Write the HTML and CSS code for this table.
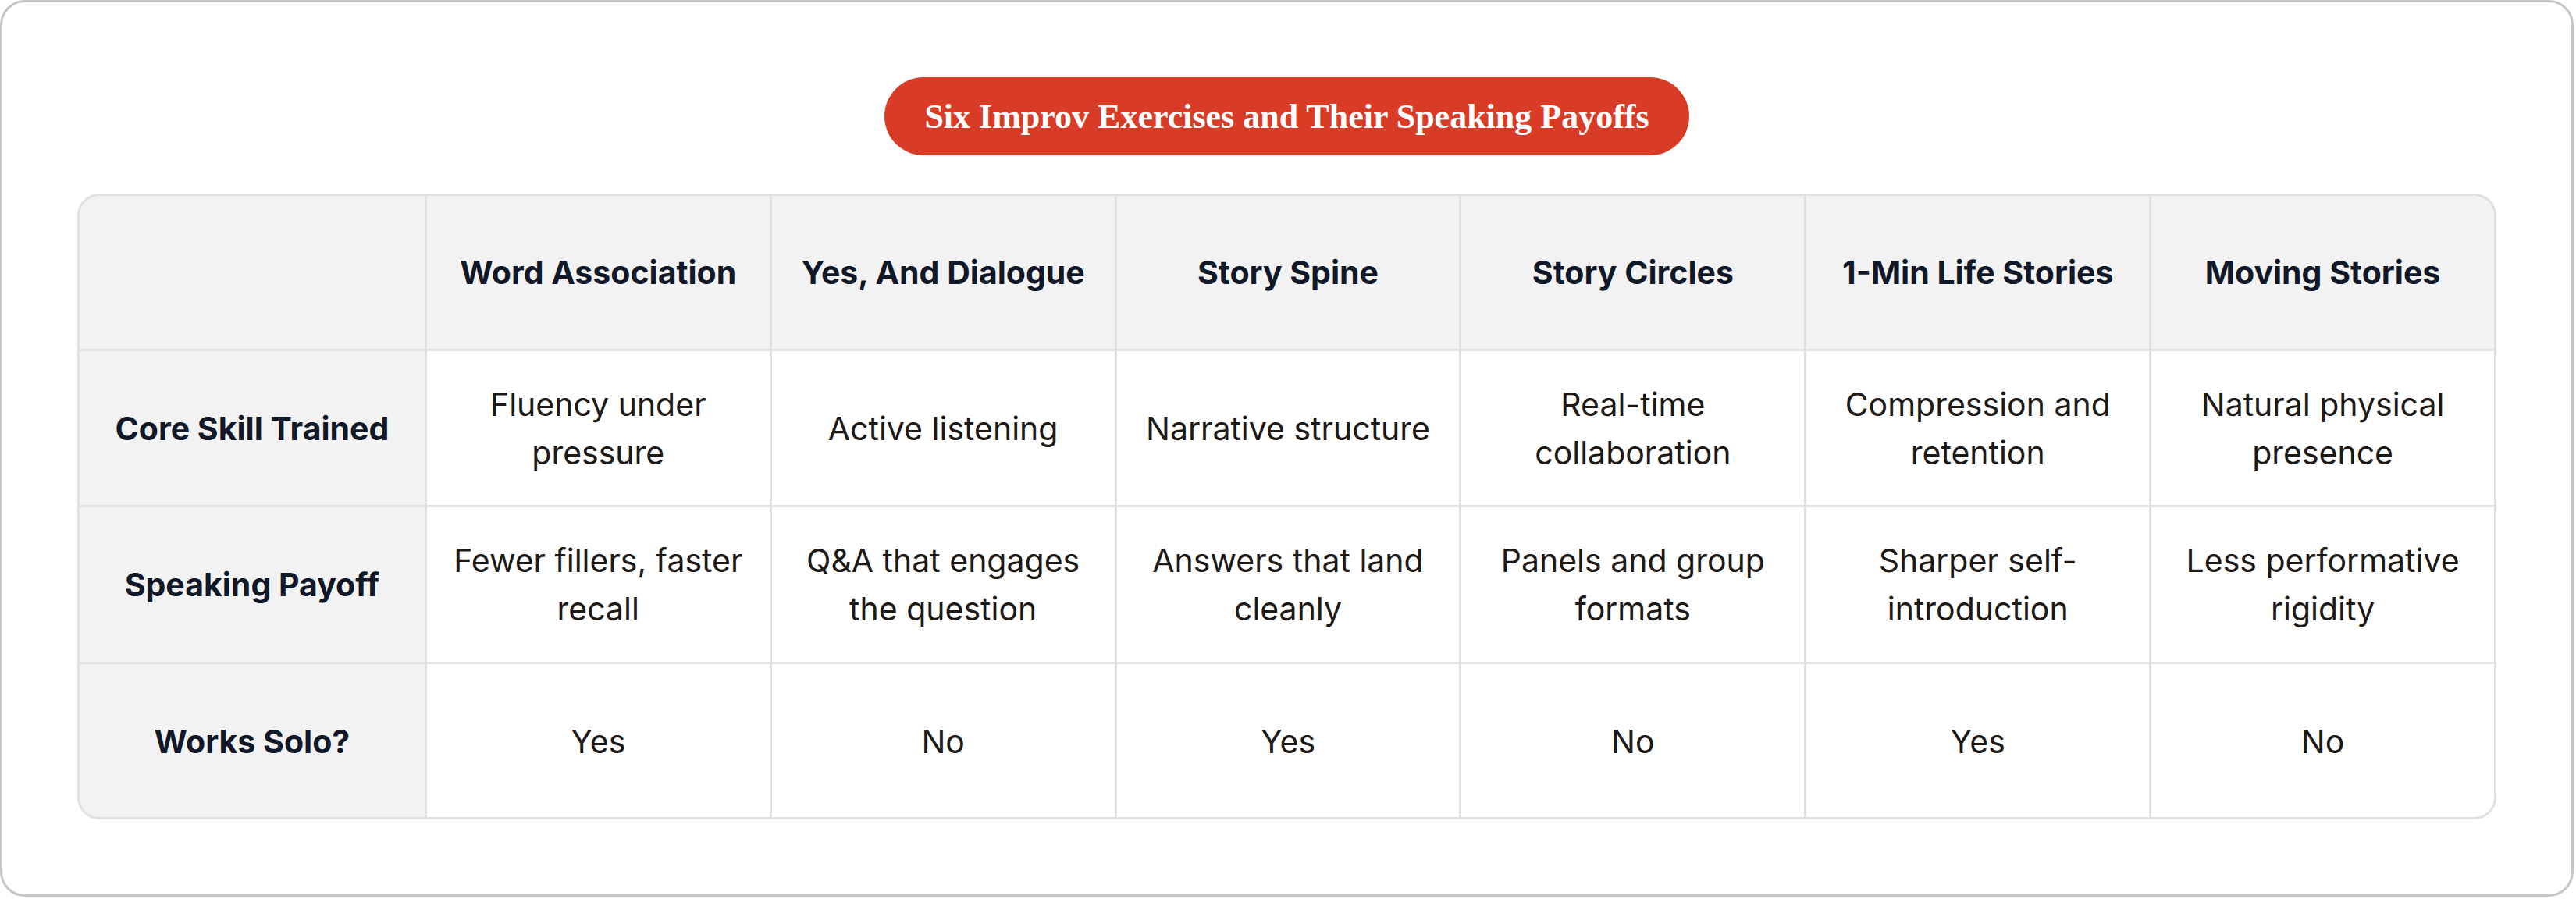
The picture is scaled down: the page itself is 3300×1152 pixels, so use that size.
FILE: index.html
```html
<!DOCTYPE html>
<html lang="en">
<head>
<meta charset="utf-8">
<title>Six Improv Exercises and Their Speaking Payoffs</title>
<link rel="stylesheet" href="styles.css">
</head>
<body>
<div class="card">
  <div class="title-row">
    <h1 class="title">Six Improv Exercises and Their Speaking Payoffs</h1>
  </div>
  <div class="table">
    <div class="cell head corner"></div>
    <div class="cell head">Word Association</div>
    <div class="cell head">Yes, And Dialogue</div>
    <div class="cell head">Story Spine</div>
    <div class="cell head">Story Circles</div>
    <div class="cell head">1-Min Life Stories</div>
    <div class="cell head">Moving Stories</div>

    <div class="cell label">Core Skill Trained</div>
    <div class="cell">Fluency under pressure</div>
    <div class="cell">Active listening</div>
    <div class="cell">Narrative structure</div>
    <div class="cell">Real-time collaboration</div>
    <div class="cell">Compression and retention</div>
    <div class="cell">Natural physical presence</div>

    <div class="cell label">Speaking Payoff</div>
    <div class="cell">Fewer fillers, faster recall</div>
    <div class="cell">Q&amp;A that engages the question</div>
    <div class="cell">Answers that land cleanly</div>
    <div class="cell">Panels and group formats</div>
    <div class="cell">Sharper self-introduction</div>
    <div class="cell">Less performative rigidity</div>

    <div class="cell label">Works Solo?</div>
    <div class="cell">Yes</div>
    <div class="cell">No</div>
    <div class="cell">Yes</div>
    <div class="cell">No</div>
    <div class="cell">Yes</div>
    <div class="cell">No</div>
  </div>
</div>
</body>
</html>
```
FILE: styles.css
```css
* { box-sizing: border-box; }

html, body {
  margin: 0;
  padding: 0;
  background: #ffffff;
}

body {
  font-family: Inter, "Noto Sans", "Liberation Sans", sans-serif;
}

.card {
  width: 3297px;
  height: 1149px;
  border: 3px solid #c6c6ca;
  border-radius: 32px;
  padding: 96px;
  background: #ffffff;
  display: flex;
  flex-direction: column;
}

.title-row {
  display: flex;
  justify-content: center;
  margin-bottom: 49px;
}

.title {
  margin: 0;
  height: 100px;
  padding: 0 51px;
  display: flex;
  align-items: center;
  background: #d83c26;
  color: #ffffff;
  border-radius: 50px;
  font-family: "Liberation Serif", "DejaVu Serif", serif;
  font-weight: 700;
  font-size: 44px;
  letter-spacing: 0;
  white-space: nowrap;
}

.table {
  display: grid;
  grid-template-columns: 442fr repeat(6, 439fr);
  grid-template-rows: 196px 197px 198px 197px;
  gap: 3px;
  background: #e1e1e4;
  border: 3px solid #e1e1e4;
  border-radius: 28px;
  overflow: hidden;
}

.cell {
  display: flex;
  align-items: center;
  justify-content: center;
  text-align: center;
  padding: 0 26px;
  background: #ffffff;
  color: #1c1917;
  font-size: 41px;
  line-height: 62px;
  font-weight: 400;
}

.head,
.label {
  background: #f2f2f2;
  color: #111827;
  font-weight: 700;
}
```
